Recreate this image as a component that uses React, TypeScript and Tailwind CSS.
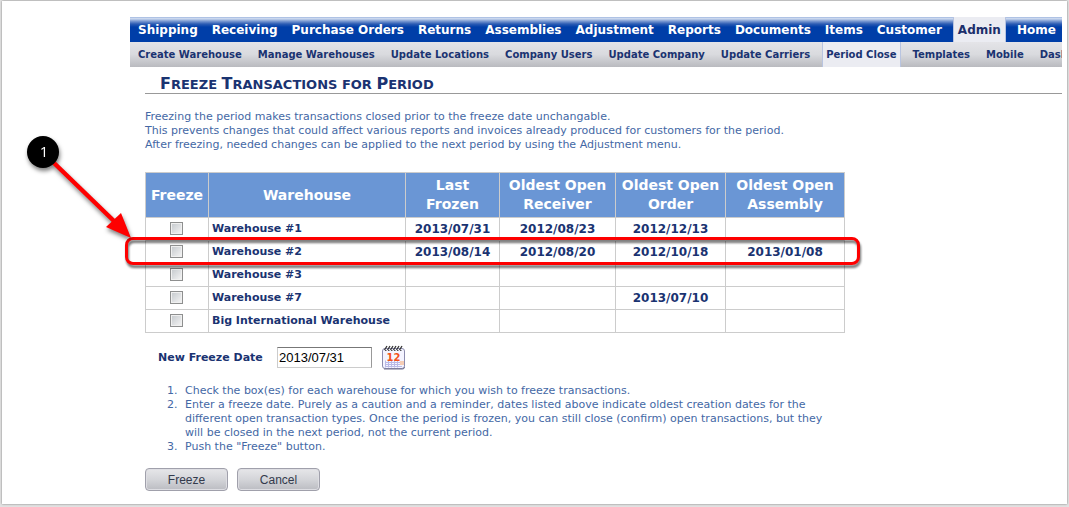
const mainTabs = ["Shipping", "Receiving", "Purchase Orders", "Returns", "Assemblies", "Adjustment", "Reports", "Documents", "Items", "Customer", "Admin", "Home"];

const subTabs = ["Create Warehouse", "Manage Warehouses", "Update Locations", "Company Users", "Update Company", "Update Carriers", "Period Close", "Templates", "Mobile", "Dash"];

const warehouses = [
  { name: "Warehouse #1", dates: ["2013/07/31", "2012/08/23", "2012/12/13", ""] },
  { name: "Warehouse #2", dates: ["2013/08/14", "2012/08/20", "2012/10/18", "2013/01/08"] },
  { name: "Warehouse #3", dates: ["", "", "", ""] },
  { name: "Warehouse #7", dates: ["", "", "2013/07/10", ""] },
  { name: "Big International Warehouse", dates: ["", "", "", ""] },
];

const headers = ["Freeze", "Warehouse", "Last Frozen", "Oldest Open Receiver", "Oldest Open Order", "Oldest Open Assembly"];

function MainNav() {
  return (
    <nav aria-label="Main" className="flex h-[25px] overflow-hidden whitespace-nowrap bg-[linear-gradient(#8aa6d8_0px,#d3def1_1px,#c3d2ec_2px,#7f9dd3_4px,#2c5cb4_7px,#003ea8_10px)] pl-px text-[12px] font-bold leading-[27px] text-white">
      {mainTabs.map((tab) =>
        tab === "Admin" ? (
          <a key={tab} href="#admin" aria-current="page" className="mx-1 border-x border-[#b8c4e0] bg-[#ebecf2] px-1 text-[#1c2f6b]">{tab}</a>
        ) : (
          <a key={tab} href="#main" className="px-[7px]">{tab}</a>
        ),
      )}
    </nav>
  );
}

function SubNav() {
  return (
    <nav aria-label="Admin" className="flex h-[25px] overflow-hidden whitespace-nowrap bg-linear-to-b from-[#e4e4e8] via-[#d9dade] to-[#b9babf] pl-2 text-[10px] font-bold leading-[26px] text-[#1a3371]">
      {subTabs.map((tab) =>
        tab === "Period Close" ? (
          <a key={tab} href="#period" aria-current="page" className="-ml-1 mr-3 border-x border-[#b8c4e0] bg-[#ebecf2] px-[3px]">{tab}</a>
        ) : (
          <a key={tab} href="#sub" className="mr-4 last:mr-0">{tab}</a>
        ),
      )}
    </nav>
  );
}

function FreezeTable() {
  return (
    <table className="w-[700px] table-fixed border-collapse text-[11px] font-bold text-[#1a3371]">
      <colgroup>
        <col className="w-[63px]" />
        <col className="w-[197px]" />
        <col className="w-[94px]" />
        <col className="w-[116px]" />
        <col className="w-[110px]" />
        <col className="w-[119px]" />
      </colgroup>
      <thead>
        <tr className="h-[45px] bg-[#6a96d5] text-[14px] leading-[19px] text-white">
          {headers.map((h) => (
            <th key={h} className="border border-[#cccccc] px-1 py-0">{h}</th>
          ))}
        </tr>
      </thead>
      <tbody>
        {warehouses.map((w) => (
          <tr key={w.name} className="h-[23px]">
            <td className="border border-[#cccccc] pt-0 pr-[2px] pb-[2px] pl-0">
              <input type="checkbox" aria-label={"Freeze " + w.name} className="mx-auto block size-[13px] appearance-none border border-[#8e8f8f] bg-linear-to-br from-[#c4c8cc] to-[#f6f6f6] shadow-[inset_0_0_0_1px_#f0f0f0]" />
            </td>
            <td className="border border-[#cccccc] py-0 pl-[3px] pr-0 whitespace-nowrap">{w.name}</td>
            {w.dates.map((d, i) => (
              <td key={i} className="border border-[#cccccc] p-0 text-center text-[12px]">{d}</td>
            ))}
          </tr>
        ))}
      </tbody>
    </table>
  );
}

function Callout() {
  return (
    <>
      <div className="pointer-events-none absolute -left-5 top-[65px] h-[28px] w-[735px] rounded-lg border-[3px] border-[#fe0000] drop-shadow-[1px_3px_1px_rgba(0,0,0,0.55)]" />
      <svg aria-label="Step 1" className="pointer-events-none absolute -left-[125px] -top-[42px] h-[120px] w-[120px] drop-shadow-[1px_3px_2px_rgba(0,0,0,0.5)]" viewBox="20 130 120 120">
        <path d="M54 163L116 223" stroke="#fe0000" strokeWidth="4.5" />
        <path d="M106 227L121 213L131 238Z" fill="#fe0000" />
        <circle cx="43" cy="152" r="16" fill="#000" />
        <text x="44" y="157" textAnchor="middle" fill="#fff" fontSize="15" fontFamily="Open Sans, sans-serif">1</text>
      </svg>
    </>
  );
}

function CalendarIcon() {
  return (
    <svg viewBox="0 0 25 25" className="size-[25px]" aria-hidden="true">
      <rect x="1.5" y="3.5" width="22" height="20" rx="2.5" fill="#f4f4ff" stroke="#8c8cae" />
      <path d="M3 24h18.5q2 0 2-2" stroke="#70708f" fill="none" />
      <path d="M4 17.5h17M4 19.5h17M4 21.5h17M4.500 15.500v7M7.500 15.500v7M10.500 15.500v7M13.500 15.500v7M16.500 15.500v7" stroke="#b9b9e6" strokeWidth="1" />
      <rect x="19" y="16" width="4" height="4" fill="#f6cdb5" />
      <text x="12.500" y="15.500" textAnchor="middle" fontSize="10" fontWeight="bold" fontFamily="DejaVu Sans, sans-serif" fill="#f4511a">12</text>
      <path d="M3.500 5l2.500-4M6.500 5l2.500-4M9.500 5l2.500-4M12.500 5l2.500-4M15.500 5l2.500-4M18.500 5l2.500-4" stroke="#333" strokeWidth="1.300" />
      <path d="M4 5.500h17" stroke="#555" strokeDasharray="1.500 1.500" />
    </svg>
  );
}

const buttonClass =
  "h-[23px] w-[83px] rounded border border-[#a0a0ab] bg-linear-to-b from-[#e6e6e9] via-[#d4d5d9] to-[#bbbcc2] font-['Liberation_Sans',sans-serif] text-[12px] leading-none text-[#333a4c] shadow-[inset_0_0_0_1px_#dedee3]";

export default function App() {
  return (
    <div className="bg-[#e2e2e2] pt-px pr-[2px] pb-[3px] pl-[2px] font-['DejaVu_Sans',sans-serif]">
      <div className="min-h-[503px] bg-white pt-4 pr-[5px] pl-32 shadow-[0_0_2px_#777777]">
        <MainNav />
        <SubNav />
        <main className="pl-[15px] text-[11px] leading-[14px] text-[#4468a5]">
          <h1 className="h-[27px] border-b border-[#999999] pl-[15px] text-[13px] font-bold uppercase leading-[33px] text-[#1a3371]">
            <span className="text-[16px]">F</span>reeze <span className="text-[16px]">T</span>ransactions for <span className="text-[16px]">P</span>eriod
          </h1>
          <p className="mt-4">
            Freezing the period makes transactions closed prior to the freeze date unchangable.
            <br />
            This prevents changes that could affect various reports and invoices already produced for customers for the period.
            <br />
            After freezing, needed changes can be applied to the next period by using the Adjustment menu.
          </p>
          <div className="relative mt-5">
            <FreezeTable />
            <Callout />
          </div>
          <div className="mt-3 flex items-center pl-[13px]">
            <label htmlFor="freeze-date" className="w-[119px] font-bold text-[#1a3371]">New Freeze Date</label>
            <input id="freeze-date" type="text" defaultValue="2013/07/31" className="h-[21px] w-[95px] border border-[#cccccc] border-t-[#777777] border-r-[#999999] px-px font-['Liberation_Sans',sans-serif] text-[13px] text-black" />
            <button type="button" aria-label="Choose date" className="ml-[9px]">
              <CalendarIcon />
            </button>
          </div>
          <ol className="mt-[14px] w-[690px] list-decimal pl-9">
            <li className="pl-1">Check the box(es) for each warehouse for which you wish to freeze transactions.</li>
            <li className="pl-1">Enter a freeze date. Purely as a caution and a reminder, dates listed above indicate oldest creation dates for the different open transaction types. Once the period is frozen, you can still close (confirm) open transactions, but they will be closed in the next period, not the current period.</li>
            <li className="pl-1">Push the "Freeze" button.</li>
          </ol>
          <div className="mt-[14px] flex gap-[9px]">
            <button type="button" className={buttonClass}>Freeze</button>
            <button type="button" className={buttonClass}>Cancel</button>
          </div>
        </main>
      </div>
    </div>
  );
}
